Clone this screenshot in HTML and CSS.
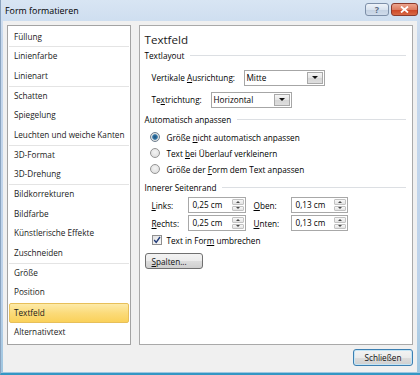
FILE: index.html
```html
<!DOCTYPE html>
<html lang="de">
<head>
<meta charset="utf-8">
<title>Form formatieren</title>
<link rel="stylesheet" href="styles.css">
</head>
<body>
<div class="window">
  <div class="titlebar">
    <span class="title">Form formatieren</span>
    <div class="tbtns">
      <span class="tb help">?</span>
      <span class="tb close"><svg width="9" height="7" viewBox="0 0 9 7"><path d="M1 0.5 L8 6.5 M8 0.5 L1 6.5" stroke="#fff" stroke-width="1.8" fill="none"/></svg></span>
    </div>
  </div>
  <div class="client">
    <div class="panes">
      <ul class="nav">
        <li class="sep">Füllung</li>
        <li>Linienfarbe</li>
        <li class="sep">Linienart</li>
        <li>Schatten</li>
        <li>Spiegelung</li>
        <li class="sep">Leuchten und weiche Kanten</li>
        <li>3D-Format</li>
        <li class="sep">3D-Drehung</li>
        <li>Bildkorrekturen</li>
        <li>Bildfarbe</li>
        <li>Künstlerische Effekte</li>
        <li class="sep">Zuschneiden</li>
        <li>Größe</li>
        <li>Position</li>
        <li class="sel">Textfeld</li>
        <li>Alternativtext</li>
      </ul>
      <div class="page">
        <div class="h1">Textfeld</div>
        <div class="group">Textlayout</div>
        <div class="row r-va">
          <span class="lbl w-va">Vertikale <u>A</u>usrichtung:</span>
          <div class="combo"><span class="cval">Mitte</span><span class="arrow"><i class="tri"></i></span></div>
        </div>
        <div class="row r-tr">
          <span class="lbl w-tr">Te<u>x</u>trichtung:</span>
          <div class="combo"><span class="cval">Horizontal</span><span class="arrow"><i class="tri"></i></span></div>
        </div>
        <div class="group g-auto">Automatisch anpassen</div>
        <div class="radio r-first"><span class="rb on"></span><span>Größe <u>n</u>icht automatisch anpassen</span></div>
        <div class="radio"><span class="rb"></span><span>Text <u>b</u>ei Überlauf verkleinern</span></div>
        <div class="radio"><span class="rb"></span><span>Größe der <u>F</u>orm dem Text anpassen</span></div>
        <div class="group g-rand">Innerer Seitenrand</div>
        <div class="row r-links">
          <span class="lbl w-l1"><u>L</u>inks:</span>
          <div class="spin"><span class="sval">0,25 cm</span><span class="sbtns"><span class="sb"><i class="tup"></i></span><span class="sb"><i class="tdn"></i></span></span></div>
          <span class="lbl w-l2"><u>O</u>ben:</span>
          <div class="spin s2"><span class="sval">0,13 cm</span><span class="sbtns"><span class="sb"><i class="tup"></i></span><span class="sb"><i class="tdn"></i></span></span></div>
        </div>
        <div class="row r-rechts">
          <span class="lbl w-l1"><u>R</u>echts:</span>
          <div class="spin"><span class="sval">0,25 cm</span><span class="sbtns"><span class="sb"><i class="tup"></i></span><span class="sb"><i class="tdn"></i></span></span></div>
          <span class="lbl w-l2"><u>U</u>nten:</span>
          <div class="spin s2"><span class="sval">0,13 cm</span><span class="sbtns"><span class="sb"><i class="tup"></i></span><span class="sb"><i class="tdn"></i></span></span></div>
        </div>
        <div class="check">
          <span class="cb"><svg width="8" height="8" viewBox="0 0 8 8"><path d="M1.2 4 L3.2 6.4 L7 1" stroke="#1f3a78" stroke-width="1.4" fill="none"/></svg></span>
          <span>Text in For<u>m</u> umbrechen</span>
        </div>
        <div class="btnrow"><span class="btn spalten"><u>S</u>palten...</span></div>
      </div>
    </div>
    <div class="footer"><span class="btn default">Schließen</span></div>
  </div>
</div>
</body>
</html>
```

FILE: styles.css
```css
* { box-sizing: border-box; }
html, body { margin: 0; padding: 0; }
body {
  width: 420px;
  height: 375px;
  overflow: hidden;
  font-family: "Open Sans", "Noto Sans", sans-serif;
  font-size: 8.2px;
  color: #000;
  background: #c9daee;
}
u { text-decoration: underline; text-underline-offset: 1px; }

.window {
  width: 420px;
  height: 375px;
  display: flex;
  flex-direction: column;
  background: linear-gradient(#d8e5f3, #c6d8ed 40px, #bcd2ea 300px, #9fc6e0);
  border-left: 1px solid #8aa3bf;
  border-bottom: 2px solid #3497c4;
}

.titlebar {
  height: 21px;
  display: flex;
  align-items: center;
  padding-left: 4px;
  padding-right: 2px;
  flex: none;
}
.title {
  font-size: 8.9px;
  color: #000;
  flex: 1;
}
.tbtns {
  display: flex;
  gap: 2px;
  align-self: flex-start;
  margin-top: 3px;
}
.tb {
  height: 13px;
  display: flex;
  align-items: center;
  justify-content: center;
  border-radius: 3px;
}
.help {
  width: 24px;
  border: 1px solid #7d8fa8;
  background: linear-gradient(#eef3f9, #d9e3ef 50%, #c3d1e2 51%, #cfdbea);
  color: #5c6b80;
  font-size: 9px;
  font-weight: bold;
  line-height: 1;
}
.close {
  width: 27px;
  border: 1px solid #8b3a2c;
  background: linear-gradient(#eca48e, #dd7d62 50%, #cc4424 51%, #d96a45);
}

.client {
  flex: 1;
  margin: 0 3px 1px 2px;
  background: #f0f0f0;
  display: flex;
  flex-direction: column;
  padding: 3.5px 4px 6px 4px;
}
.panes {
  flex: 1;
  display: flex;
  gap: 8px;
  min-height: 0;
}

.nav {
  list-style: none;
  margin: 0;
  width: 123.5px;
  flex: none;
  background: #fff;
  border: 1px solid #a3a3a3;
  padding: 2px 1px 0 1px;
}
.nav li {
  height: 19.7px;
  line-height: 18.7px;
  padding-left: 5px;
  white-space: nowrap;
  color: #1a1a1a;
  border: 1px solid transparent;
  border-top: 0;
  border-left: 0;
  border-right: 0;
}
.nav li.sep { border-bottom: 1px solid #e4e4e4; }
.nav li.sel {
  background: linear-gradient(#fdeaa8, #fbdb7a 50%, #fad15a 100%);
  border: 1px solid #e7bf5a;
  border-radius: 2px;
  line-height: 17.7px;
  padding-left: 4px;
}

.page {
  flex: 1;
  background: #fff;
  border: 1px solid #a9a9a9;
  padding: 5px 6px 0 5px;
  display: flex;
  flex-direction: column;
}
.h1 {
  height: 18px;
  line-height: 18px;
  font-size: 11.6px;
  color: #1a1a1a;
}
.group {
  height: 13px;
  line-height: 13px;
  display: flex;
  align-items: center;
  gap: 6px;
  white-space: nowrap;
}
.group::after {
  content: "";
  flex: 1;
  height: 1px;
  background: #dcdfe3;
}
.g-auto { margin-top: 5px; }
.g-rand { margin-top: 3.5px; }

.row {
  height: 16px;
  display: flex;
  align-items: center;
  padding-left: 7px;
  white-space: nowrap;
}
.r-va { margin-top: 8px; }
.r-tr { margin-top: 6px; }
.r-links { margin-top: 3.5px; }
.r-rechts { margin-top: 2px; }

.lbl { flex: none; }
.w-va { width: 92px; }
.w-tr { width: 59px; }
.w-l1 { width: 36px; }
.w-l2 { width: 37px; margin-left: 8px; }

.combo {
  width: 81px;
  height: 16px;
  border: 1px solid #a6a6a6;
  background: #fff;
  display: flex;
  align-items: center;
  padding: 1px;
}
.cval { flex: 1; padding-left: 1px; }
.arrow {
  width: 16px;
  height: 100%;
  border: 1px solid #a9a9a9;
  background: linear-gradient(#f6f6f6, #e4e4e4 50%, #d6d6d6 51%, #dedede);
  display: flex;
  align-items: center;
  justify-content: center;
}
.tri {
  width: 0; height: 0;
  border-left: 3px solid transparent;
  border-right: 3px solid transparent;
  border-top: 3px solid #111;
}

.radio {
  height: 16px;
  display: flex;
  align-items: center;
  padding-left: 5px;
  gap: 7px;
  white-space: nowrap;
}
.r-first { margin-top: 3.5px; }
.rb {
  width: 10px;
  height: 10px;
  border-radius: 50%;
  border: 1px solid #959595;
  background: radial-gradient(circle at 50% 40%, #f4f4f4, #d9d9d9);
  flex: none;
}
.rb.on {
  background: radial-gradient(circle, #1c4f7c 0, #2e6e9e 1.8px, #3c7fae 2.4px, #e6e6e6 3.2px, #d4d4d4 5px);
  border-color: #6e7f90;
}

.spin {
  width: 58px;
  height: 16px;
  border: 1px solid #a8a8a8;
  background: #fff;
  display: flex;
  align-items: stretch;
  padding: 1px;
}
.spin.s2 { width: 57px; }
.sval { flex: 1; padding-left: 3px; line-height: 12px; }
.sbtns {
  width: 12px;
  display: flex;
  flex-direction: column;
  gap: 1px;
}
.sb {
  flex: 1;
  border: 1px solid #c2c2c2;
  border-radius: 1px;
  background: linear-gradient(#f8f8f8, #e3e3e3);
  display: flex;
  align-items: center;
  justify-content: center;
}
.tup, .tdn {
  width: 0; height: 0;
  border-left: 2.5px solid transparent;
  border-right: 2.5px solid transparent;
}
.tup { border-bottom: 2.5px solid #4a4a4a; }
.tdn { border-top: 2.5px solid #4a4a4a; }

.check {
  height: 16px;
  margin-top: 1px;
  display: flex;
  align-items: center;
  padding-left: 7px;
  gap: 5px;
  white-space: nowrap;
}
.cb {
  width: 10px;
  height: 10px;
  border: 1px solid #8f8f8f;
  background: linear-gradient(135deg, #e3e3e3, #f8f8f8);
  display: flex;
  align-items: center;
  justify-content: center;
  flex: none;
}

.btnrow {
  margin-top: 5px;
  display: flex;
}
.btn {
  height: 17px;
  display: flex;
  align-items: center;
  justify-content: center;
  border: 1px solid #707070;
  border-radius: 3px;
  background: linear-gradient(#f3f3f3, #ebebeb 50%, #dddddd 51%, #cfcfcf);
  color: #111;
  white-space: nowrap;
}
.spalten {
  width: 58px;
  height: 16px;
  justify-content: flex-start;
  padding-left: 6px;
}

.footer {
  height: 17px;
  margin-top: 4px;
  display: flex;
  justify-content: flex-end;
  flex: none;
}
.default {
  width: 60px;
  border-color: #3c7fb1;
  box-shadow: inset 0 0 0 1px #c4e5f6;
}
```
